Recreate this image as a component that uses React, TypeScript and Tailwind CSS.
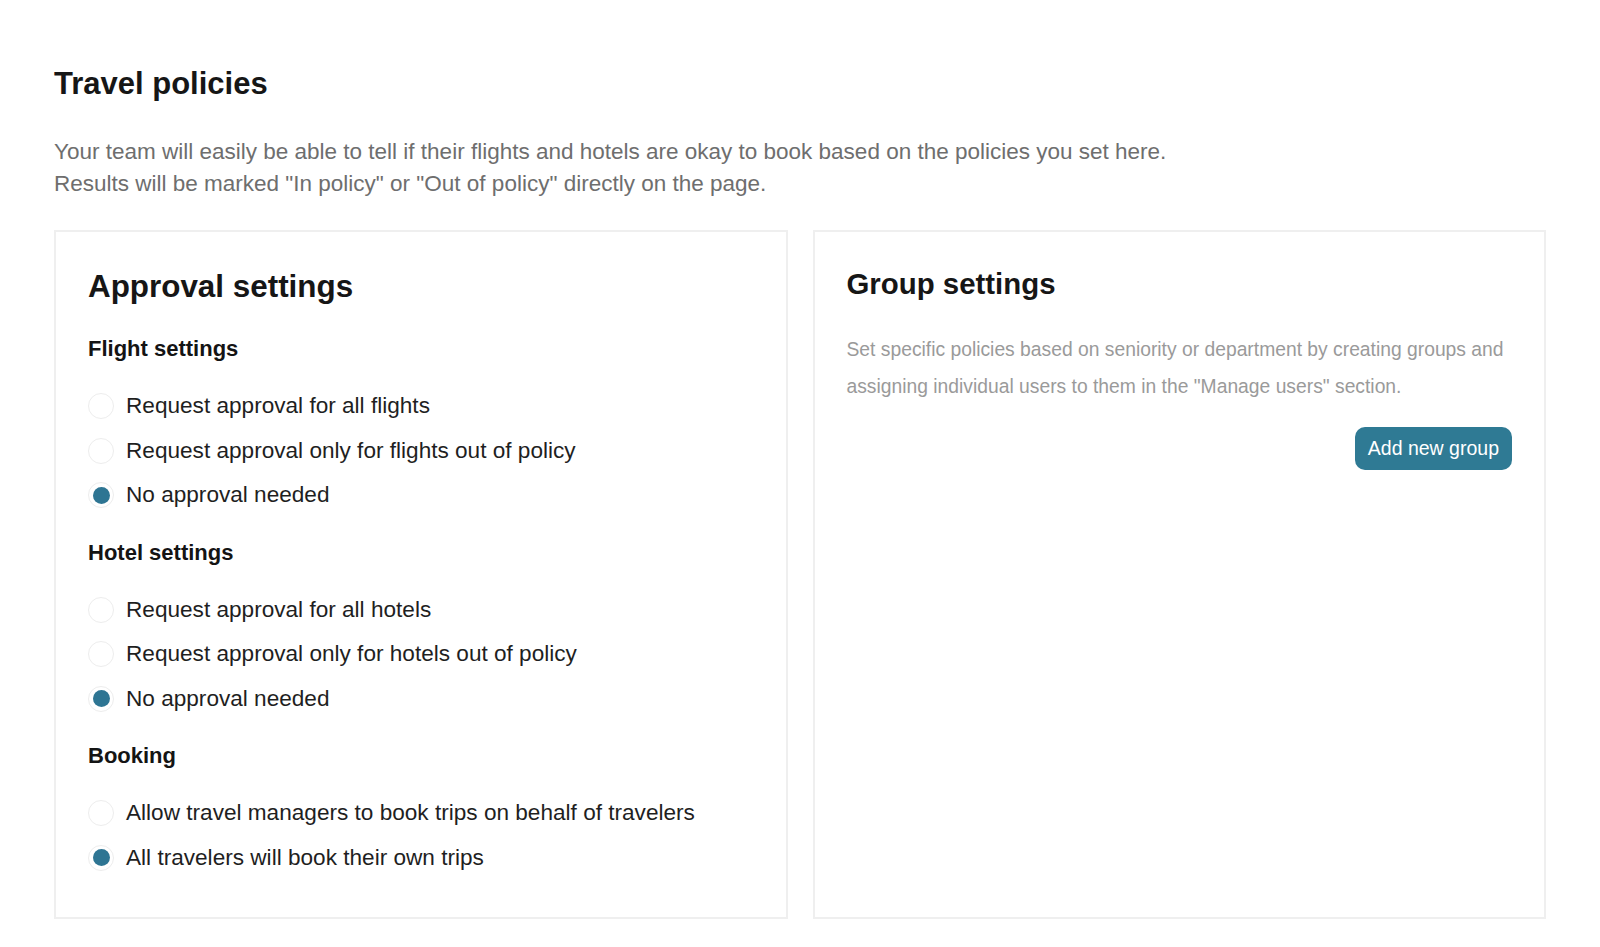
import React from "react";

type Option = { label: string; checked?: boolean };

type Section = { title: string; options: Option[] };

const sections: Section[] = [
  {
    title: "Flight settings",
    options: [
      { label: "Request approval for all flights" },
      { label: "Request approval only for flights out of policy" },
      { label: "No approval needed", checked: true },
    ],
  },
  {
    title: "Hotel settings",
    options: [
      { label: "Request approval for all hotels" },
      { label: "Request approval only for hotels out of policy" },
      { label: "No approval needed", checked: true },
    ],
  },
  {
    title: "Booking",
    options: [
      { label: "Allow travel managers to book trips on behalf of travelers" },
      { label: "All travelers will book their own trips", checked: true },
    ],
  },
];

function Radio({ checked }: { checked?: boolean }) {
  return (
    <span className="flex h-[26px] w-[26px] shrink-0 items-center justify-center rounded-full border-[1.5px] border-[#ededed] bg-white">
      {checked && <span className="h-[17px] w-[17px] rounded-full bg-[#2e7593]" />}
    </span>
  );
}

function SettingsSection({ section, first }: { section: Section; first?: boolean }) {
  return (
    <div className={first ? "mt-[28px]" : "mt-[20px]"}>
      <h3 className="mb-[20px] text-[22px] font-bold leading-[30px] text-[#141414]">
        {section.title}
      </h3>
      {section.options.map((opt) => (
        <label key={opt.label} className="flex h-[44.5px] items-center gap-[12px]">
          <Radio checked={opt.checked} />
          <span className="text-[22.6px] leading-[30px] text-[#1f1f1f]">{opt.label}</span>
        </label>
      ))}
    </div>
  );
}

export default function App() {
  return (
    <div className="min-h-screen w-full bg-white px-[54px] pt-[65px] pb-[28px] font-['Liberation_Sans',Arial,sans-serif]">
      <h1 className="text-[31px] font-bold leading-[38px] text-[#161616]">Travel policies</h1>
      <p className="mt-[33px] text-[22.5px] leading-[32px] text-[#6e6e6e]">
        Your team will easily be able to tell if their flights and hotels are okay to book based on the policies you set here.
        <br />
        Results will be marked "In policy" or "Out of policy" directly on the page.
      </p>

      <div className="mt-[30px] grid grid-cols-2 gap-[25px]">
        <section className="border-2 border-[#efefef] px-[32px] pt-[36px] pb-[37px]">
          <h2 className="text-[31.4px] font-bold leading-[38px] text-[#161616]">Approval settings</h2>
          {sections.map((s, i) => (
            <SettingsSection key={s.title} section={s} first={i === 0} />
          ))}
        </section>

        <section className="border-2 border-[#efefef] px-[32px] pt-[34px]">
          <h2 className="text-[29.4px] font-bold leading-[36px] text-[#161616]">Group settings</h2>
          <p className="mt-[29px] text-[19.3px] leading-[37px] text-[#9a9a9a]">
            Set specific policies based on seniority or department by creating groups and assigning individual users to them in the "Manage users" section.
          </p>
          <div className="mt-[22px] flex justify-end">
            <button className="h-[43px] rounded-[10px] bg-[#2f7a94] px-[13px] text-[19.5px] text-white">
              Add new group
            </button>
          </div>
        </section>
      </div>
    </div>
  );
}
